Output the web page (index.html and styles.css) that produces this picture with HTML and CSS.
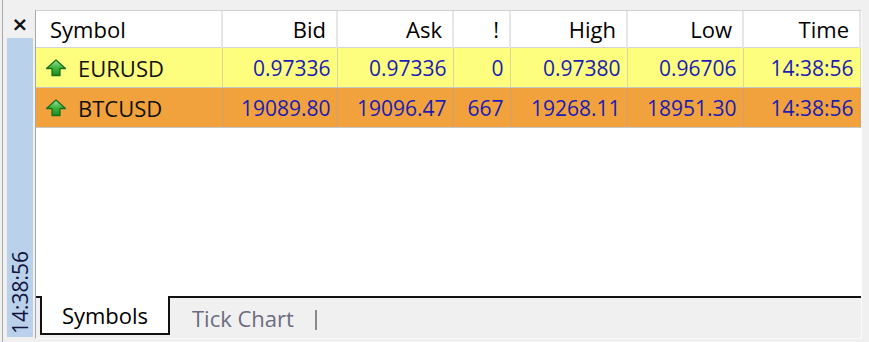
FILE: index.html
```html
<!DOCTYPE html>
<html>
<head>
<meta charset="utf-8">
<link rel="stylesheet" href="styles.css">
</head>
<body>
<div class="window">
  <div class="side">
    <div class="close">×</div>
    <div class="strip"><span class="vtime">14:38:56</span></div>
  </div>
  <div class="main">
    <div class="frame">
      <div class="content">
        <table class="quotes">
          <colgroup>
            <col class="c-sym"><col class="c-bid"><col class="c-ask"><col class="c-spr"><col class="c-high"><col class="c-low"><col class="c-time">
          </colgroup>
          <thead>
            <tr>
              <th class="sym">Symbol</th><th>Bid</th><th>Ask</th><th>!</th><th>High</th><th>Low</th><th>Time</th>
            </tr>
          </thead>
          <tbody>
            <tr class="yellow">
              <td class="sym"><span class="name"><svg class="arrow" viewBox="0 0 22 18" width="22" height="18"><defs><linearGradient id="g1" x1="0" y1="0" x2="0" y2="1"><stop offset="0" stop-color="#9be39b"/><stop offset="0.5" stop-color="#3fb53f"/><stop offset="1" stop-color="#1c8a1c"/></linearGradient></defs><polygon points="11,1 20.5,9.5 15,9.5 15,16.5 7,16.5 7,9.5 1.5,9.5" fill="url(#g1)" stroke="#1d6e1d" stroke-width="1.3" stroke-linejoin="round"/></svg>EURUSD</span></td>
              <td>0.97336</td><td>0.97336</td><td>0</td><td>0.97380</td><td>0.96706</td><td>14:38:56</td>
            </tr>
            <tr class="orange">
              <td class="sym"><span class="name"><svg class="arrow" viewBox="0 0 22 18" width="22" height="18"><polygon points="11,1 20.5,9.5 15,9.5 15,16.5 7,16.5 7,9.5 1.5,9.5" fill="url(#g1)" stroke="#1d6e1d" stroke-width="1.3" stroke-linejoin="round"/></svg>BTCUSD</span></td>
              <td>19089.80</td><td>19096.47</td><td>667</td><td>19268.11</td><td>18951.30</td><td>14:38:56</td>
            </tr>
          </tbody>
        </table>
      </div>
      <div class="tabs">
        <div class="tab active">Symbols</div>
        <div class="tab">Tick Chart</div>
        <div class="sep"></div>
      </div>
    </div>
  </div>
</div>
</body>
</html>
```
FILE: styles.css
```css
html, body {
  margin: 0;
  padding: 0;
  background: #f0f0f0;
}
body {
  font-family: "Open Sans", "Noto Sans", sans-serif;
  font-size: 21px;
  color: #000;
}
.window {
  display: flex;
  width: 869px;
  height: 342px;
  box-sizing: border-box;
}
.side {
  margin-left: 2px;
  border-left: 1px solid #a9a9a9;
  padding: 12px 2px 5px 4px;
  width: 26px;
  display: flex;
  flex-direction: column;
}
.close {
  height: 26px;
  line-height: 24px;
  text-align: center;
  font-family: "DejaVu Sans", sans-serif;
  font-weight: bold;
  font-size: 20px;
  color: #111;
}
.strip {
  flex: 1;
  background: #b9d1ea;
  display: flex;
  align-items: flex-end;
  justify-content: center;
  padding-bottom: 3px;
}
.vtime {
  writing-mode: vertical-rl;
  transform: rotate(180deg);
  color: #12123c;
  line-height: 26px;
  font-size: 21px;
}
.main {
  flex: 1;
  padding: 10px 8px 3px 0;
  display: flex;
}
.frame {
  flex: 1;
  display: flex;
  flex-direction: column;
  border-top: 1px solid #cfcfcf;
  border-left: 1px solid #a9a9a9;
  border-right: 1px solid #fafafa;
  border-bottom: 1px solid #fafafa;
}
.content {
  flex: 1;
  background: #fff;
}
.quotes {
  border-collapse: collapse;
  table-layout: fixed;
  width: 824px;
}
.c-sym { width: 186px; }
.c-bid { width: 115px; }
.c-ask { width: 116px; }
.c-spr { width: 57px; }
.c-high { width: 117px; }
.c-low { width: 116px; }
.c-time { width: 117px; }
.quotes th {
  height: 36px;
  padding: 0 10px 0 0;
  text-align: right;
  font-weight: normal;
  font-size: 22px;
  background: #fff;
  border-right: 2px solid #e6e6e6;
  border-bottom: 1px solid #d4d4d4;
  white-space: nowrap;
}
.quotes th.sym {
  text-align: left;
  padding-left: 14px;
}
.quotes td {
  height: 39px;
  padding: 0 6px 0 0;
  text-align: right;
  color: #1c1cb4;
  border-right: 1px solid #cfcfb0;
  border-bottom: 1px solid #c8c8c8;
  white-space: nowrap;
}
.quotes td.sym {
  text-align: left;
  padding-left: 9px;
  color: #111;
  font-size: 22px;
}
.name {
  display: flex;
  align-items: center;
  gap: 11px;
}
.arrow {
  display: block;
  flex: none;
}
.yellow td {
  background: #fefe7e;
  border-right-color: #d8d8a0;
}
.orange td {
  background: #f1a23c;
  border-right-color: #d0a070;
}
.tabs {
  height: 40px;
  border-top: 2px solid #111;
  background: #f0f0f0;
  display: flex;
  align-items: stretch;
  padding-left: 4px;
  font-size: 22px;
}
.tab {
  display: flex;
  align-items: center;
  padding: 0 21px 0 22px;
  color: #6c6c80;
}
.tab.active {
  margin-top: -2px;
  width: 126px;
  padding: 0;
  justify-content: center;
  background: #fff;
  color: #000;
  border: 2px solid #111;
  border-top: none;
  margin-bottom: 3px;
}
.sep {
  width: 2px;
  background: #8a8a8a;
  margin: 12px 0 8px 0;
}
```
